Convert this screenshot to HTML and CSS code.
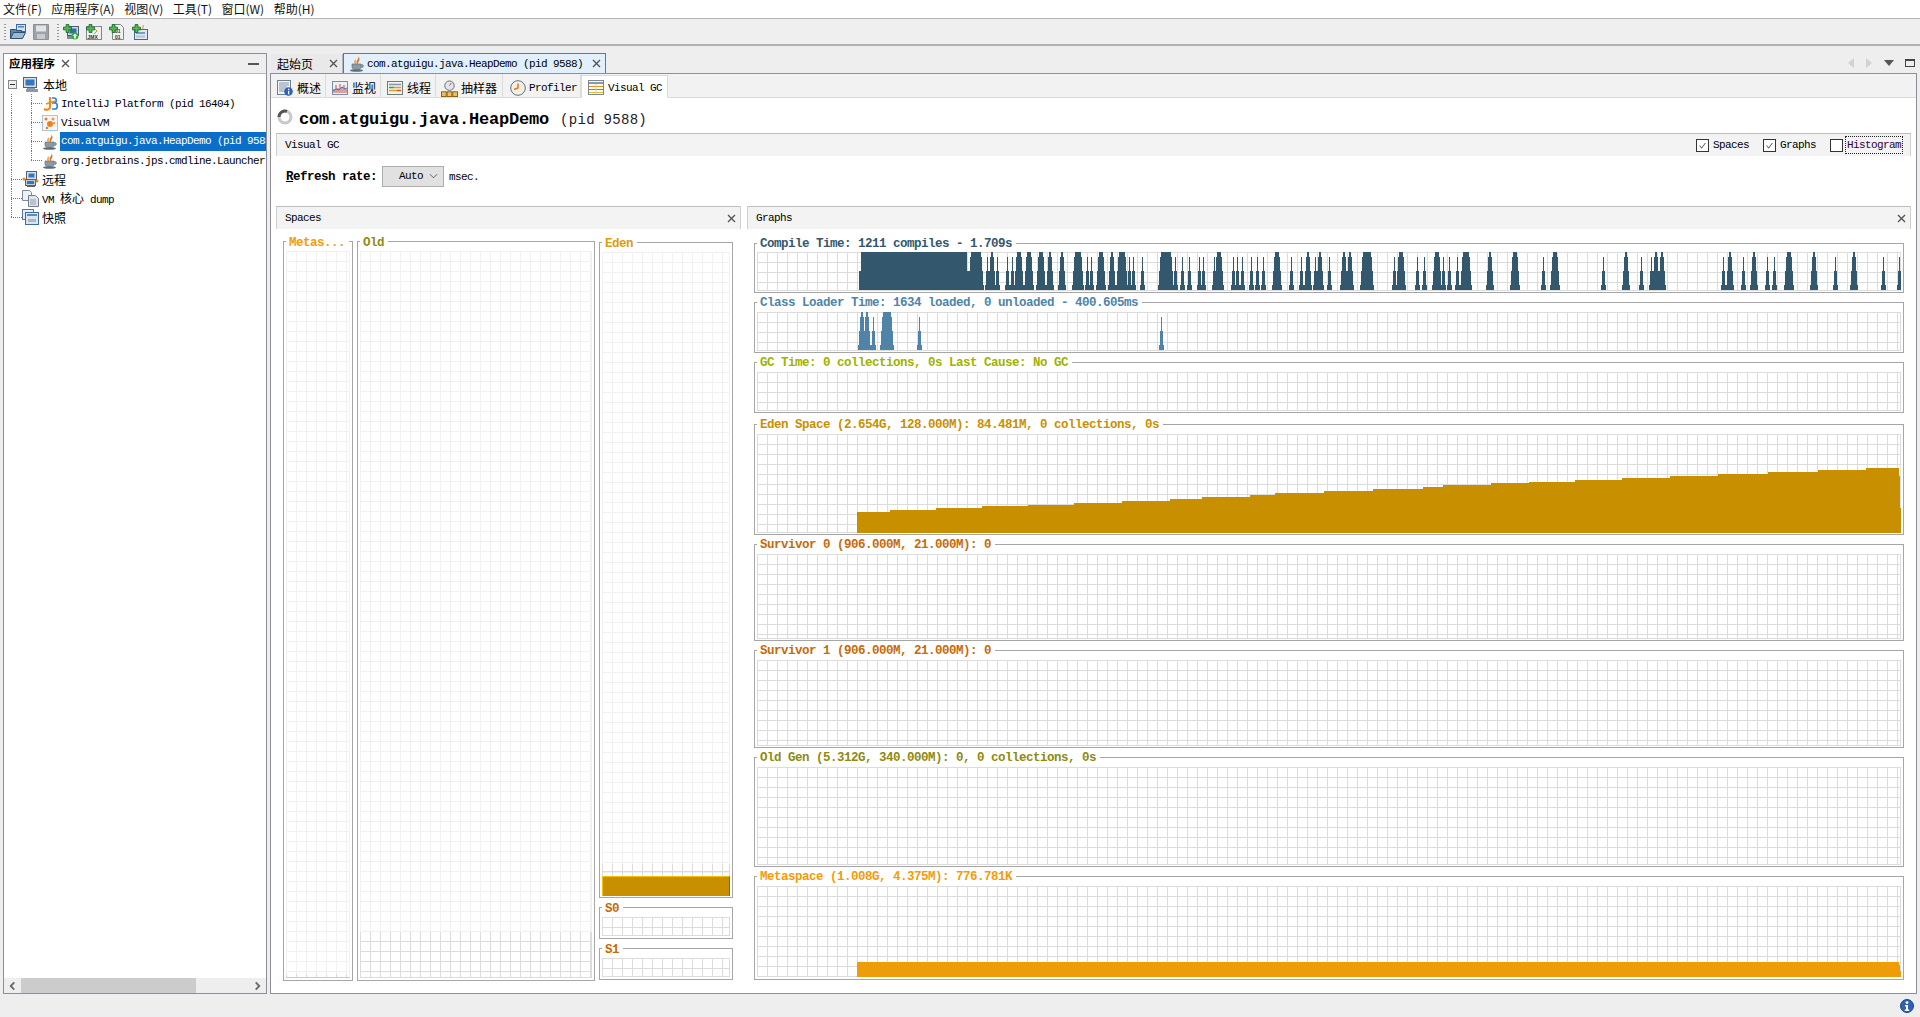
FILE: index.html
```html
<!DOCTYPE html>
<html lang="zh">
<head>
<meta charset="utf-8">
<title>VisualVM</title>
<link rel="stylesheet" href="styles.css">
</head>
<body>
<svg class="defs" aria-hidden="true">
  <defs>
    <path id="t" d="M-2 38V33H-1V19H0V5H1V19H2V33H3V38Z"/>
    <path id="f2" d="M-4 38V33H-3V19H-2V5H-1V0H1V5H2V19H3V33H4V38Z"/>
    <path id="f4" d="M-5 38V33H-4V19H-3V5H-2V0H2V5H3V19H4V33H5V38Z"/>
    <path id="f6" d="M-6 38V33H-5V19H-4V5H-3V0H3V5H4V19H5V33H6V38Z"/>
    <path id="f8" d="M-7 38V33H-6V19H-5V5H-4V0H4V5H5V19H6V33H7V38Z"/>
    <path id="f10" d="M-8 38V33H-7V19H-6V5H-5V0H5V5H6V19H7V33H8V38Z"/>
    <symbol id="plus" viewBox="0 0 10 10"><path d="M3.5.5h3v3h3v3h-3v3h-3v-3h-3v-3h3z" fill="#4dbb4d" stroke="#1d6a2a"/></symbol>
    <symbol id="i-x" viewBox="0 0 9 9"><path d="M1 1l7 7M8 1L1 8" stroke="#555" stroke-width="1.4" fill="none"/></symbol>
    <symbol id="i-computer" viewBox="0 0 17 17"><rect x=".5" y="1.5" width="13" height="10" fill="#d9e0e8" stroke="#56636f"/><rect x="2.5" y="3.5" width="9" height="6" fill="#2f78c4"/><path d="M4 12h8v1h3v3H3v-3h1z" fill="#8c98a3"/></symbol>
    <symbol id="i-java" viewBox="0 0 16 16"><path d="M9 0c2 3-3 4-1 8h1c-1-2 4-4 0-8z" fill="#e8761a"/><path d="M6 3c0 2-2 3 0 5h1C6 6 8 5 6 3z" fill="#f0a040"/><path d="M3 8h9v3c0 2-2 3-4.500 3S3 13 3 11z" fill="#8d9aa6" stroke="#5a6874" stroke-width=".6"/><path d="M12 9h2v2h-2" fill="none" stroke="#5a6874"/><ellipse cx="7.500" cy="14.500" rx="6.500" ry="1.300" fill="#5f6d79"/></symbol>
    <symbol id="i-idea" viewBox="0 0 16 16"><path d="M8 1v10c0 2.500-3 3.500-6 2" fill="none" stroke="#f08a1d" stroke-width="2.200"/><path d="M10 2h2c3 0 3 5 0 5h-2m0 0h3c3 0 3 6 0 6h-3" fill="none" stroke="#3a7fd0" stroke-width="1.600"/><path d="M4 8l9-3" stroke="#f08a1d" stroke-width="1.500"/></symbol>
    <symbol id="i-vvm" viewBox="0 0 16 16"><rect x=".5" y=".5" width="15" height="15" fill="#f6f6f6" stroke="#a9c6de"/><circle cx="8" cy="9" r="3" fill="#ef7f1a"/><circle cx="4" cy="4" r="1.500" fill="#ef7f1a"/><circle cx="11" cy="4" r="1.500" fill="#f29a50"/><circle cx="5" cy="13" r="1.200" fill="#ef7f1a"/><circle cx="12" cy="8" r="1" fill="#ef7f1a"/></symbol>
    <symbol id="i-remote" viewBox="0 0 17 17"><rect x="4.500" y=".5" width="10" height="8" fill="#d9e0e8" stroke="#56636f"/><rect x="6.500" y="2.500" width="6" height="4" fill="#2f78c4"/><rect x="3.500" y="8.500" width="10" height="6" fill="#c8ced4" stroke="#56636f"/><rect x="5" y="10" width="7" height="3" fill="#2f78c4"/><circle cx="2" cy="8" r="1.500" fill="#e08a20"/><circle cx="15" cy="10" r="1.500" fill="#e08a20"/><path d="M5 15.500h8" stroke="#56636f"/></symbol>
    <symbol id="i-dump" viewBox="0 0 17 17"><path d="M.5.5h7l2 2v8h-9z" fill="#eef1f4" stroke="#7c8a98"/><path d="M6.500 5.500h7l3 3v8h-10z" fill="#dfe5eb" stroke="#6f7e8c"/><path d="M8 10h6M8 12h6M8 14h6" stroke="#8fa0b0"/></symbol>
    <symbol id="i-snap" viewBox="0 0 17 17"><rect x=".5" y=".5" width="11" height="10" fill="#e6edf4" stroke="#4f78a8"/><rect x="3.500" y="3.500" width="13" height="12" fill="#dbe5ef" stroke="#3f6a9c"/><rect x="5" y="5" width="10" height="2" fill="#5b8cc0"/><path d="M6 10h8v3H6z" fill="#a9b8c6"/></symbol>
    <symbol id="i-info" viewBox="0 0 14 14"><circle cx="7" cy="7" r="6.500" fill="#2f62b4" stroke="#1c4488"/><circle cx="7" cy="3.600" r="1.400" fill="#fff"/><path d="M5 6h3v4.500h1.200V12H4.800v-1.500H6V7.500H5z" fill="#fff"/></symbol>
    <symbol id="t-open" viewBox="0 0 16 16"><rect x="6.500" y=".5" width="9" height="7" fill="#cfe0f0" stroke="#3f6a9c"/><rect x="8" y="2" width="6" height="1.500" fill="#4f82b8"/><path d="M.5 5.500h5l1 1h5v8h-11z" fill="#5f87ad" stroke="#2f4f70"/><path d="M.5 14.500l3-6h12l-3 6z" fill="#9ab8d4" stroke="#2f4f70"/></symbol>
    <symbol id="t-save" viewBox="0 0 16 16"><path d="M.5.500h15v15H.5z" fill="#9ca2a8" stroke="#8a9096"/><rect x="3" y="1.500" width="10" height="6" fill="#e2e4e6"/><rect x="4" y="10" width="8" height="5" fill="#c6cace"/></symbol>
    <symbol id="t-remote" viewBox="0 0 16 16"><rect x="4.500" y="2.500" width="11" height="9" fill="#cfd7df" stroke="#4f5d6a"/><rect x="6.500" y="4.500" width="7" height="5" fill="#2f6fb0"/><path d="M4 12h9v3H4z" fill="#7f8b96"/><circle cx="12" cy="12" r="3.500" fill="#3aa53a"/><path d="M12 9.500l2.500 2.500h-1.500v2.500h-2V12H9.500z" fill="#d8f4d8"/><use href="#plus" width="9" height="9"/></symbol>
    <symbol id="t-jmx" viewBox="0 0 16 16"><rect x=".5" y="2.500" width="15" height="13" fill="#eef0f2" stroke="#7a8894"/><path d="M8 4l3 3-3 3" fill="none" stroke="#e0902a"/><text x="1.500" y="14.500" class="tiny">JMX</text><use href="#plus" width="9" height="9"/></symbol>
    <symbol id="t-dump" viewBox="0 0 16 16"><path d="M3.500.5h8l3 3v12h-11z" fill="#eef0f2" stroke="#7a8894"/><text x="6" y="9" class="tiny">01</text><text x="6" y="14.500" class="tiny">01</text><use href="#plus" width="9" height="9"/></symbol>
    <symbol id="t-snap" viewBox="0 0 16 16"><rect x="2.500" y="5.500" width="13" height="10" fill="#dfe7ef" stroke="#3f6a9c"/><path d="M4 8h9v2H4z" fill="#6fa0d0"/><path d="M4 11.500h9v2H4z" fill="#b7c4d0"/><path d="M11 1c1 2-1 2 0 4" stroke="#e08a20" fill="none"/><use href="#plus" width="9" height="9"/></symbol>
    <symbol id="s-over" viewBox="0 0 16 16"><rect x=".5" y=".5" width="13" height="14" fill="#f3f5f7" stroke="#6f7e8c"/><path d="M2 3h10M2 5h10M2 7h8M2 9h6M2 11h6" stroke="#7f97ad"/><circle cx="11.500" cy="11.500" r="4.300" fill="#2f62b4"/><path d="M11 8.800h1.300v1.200H11zM11 10.800h1.300v3.400H11z" fill="#fff"/></symbol>
    <symbol id="s-mon" viewBox="0 0 16 16"><rect x=".5" y="1.500" width="15" height="13" fill="#eaf0f6" stroke="#7a8fa3"/><path d="M2 13V9M4 13V5M6 13V8M8 13V4M10 13V7M12 13V5M14 13V9" stroke="#d84a3a" stroke-width="1"/><path d="M1 11l3-2 3 1 3-3 3 2 2-1" stroke="#2f78c4" fill="none"/></symbol>
    <symbol id="s-thr" viewBox="0 0 16 16"><rect x=".5" y="1.500" width="15" height="13" fill="#f0f2ee" stroke="#6f7e70"/><path d="M2 4.500h12" stroke="#7f97ad" stroke-width="1.500"/><path d="M2 7.500h5" stroke="#3aa53a" stroke-width="1.500"/><path d="M7 7.500h7" stroke="#e0a020" stroke-width="1.500"/><path d="M2 10.500h8" stroke="#e0a020" stroke-width="1.500"/><path d="M10 10.500h4" stroke="#d84a3a" stroke-width="1.500"/></symbol>
    <symbol id="s-smp" viewBox="0 0 18 18"><circle cx="9" cy="6" r="5" fill="#dfe5eb" stroke="#5f6d79"/><path d="M9 6L11 3" stroke="#d84a3a"/><rect x=".5" y="12.500" width="5" height="5" fill="#f0c060" stroke="#8a5a10"/><rect x="6.500" y="12.500" width="5" height="5" fill="#f0c060" stroke="#8a5a10"/><rect x="12.500" y="12.500" width="5" height="5" fill="#f0c060" stroke="#8a5a10"/></symbol>
    <symbol id="s-clk" viewBox="0 0 16 16"><circle cx="8" cy="8" r="7.300" fill="#f7f0e4" stroke="#5f7084"/><path d="M8 3.500V8l-4 1.500" stroke="#e0761a" stroke-width="1.500" fill="none"/></symbol>
    <symbol id="s-gc" viewBox="0 0 16 16"><rect x=".5" y=".5" width="15" height="14" fill="#fbfbf0" stroke="#7a8894"/><path d="M1 3h14" stroke="#8a9aa8" stroke-width="2"/><path d="M1 6.500h14" stroke="#e09020"/><path d="M1 9.500h14" stroke="#4aa84a"/><path d="M1 12.500h14" stroke="#e0c020"/><path d="M8 4v10" stroke="#c8ccd0"/></symbol>
  </defs>
</svg>

<header class="menubar">
  <span>文件(F)</span><span>应用程序(A)</span><span>视图(V)</span><span>工具(T)</span><span>窗口(W)</span><span>帮助(H)</span>
</header>

<div class="toolbar">
  <i class="grip"></i>
  <svg class="tool"><use href="#t-open"/></svg>
  <svg class="tool"><use href="#t-save"/></svg>
  <i class="grip grip-mid"></i>
  <svg class="tool"><use href="#t-remote"/></svg>
  <svg class="tool"><use href="#t-jmx"/></svg>
  <svg class="tool"><use href="#t-dump"/></svg>
  <svg class="tool"><use href="#t-snap"/></svg>
</div>

<main class="workspace">
  <section class="nav">
    <div class="nav-head">
      <div class="nav-tab"><b class="cjk">应用程序</b><svg class="x"><use href="#i-x"/></svg></div>
      <i class="minimize"></i>
    </div>
    <div class="tree">
      <div class="row"><i class="expander"></i><svg class="ico-top"><use href="#i-computer"/></svg><span class="cjk label">本地</span></div>
      <div class="row"><i class="guide"></i><i class="elbow"></i><svg class="ico"><use href="#i-idea"/></svg><span class="mono label">IntelliJ Platform (pid 16404)</span></div>
      <div class="row"><i class="guide"></i><i class="elbow"></i><svg class="ico"><use href="#i-vvm"/></svg><span class="mono label">VisualVM</span></div>
      <div class="row"><i class="guide"></i><i class="elbow"></i><svg class="ico"><use href="#i-java"/></svg><span class="mono label selected">com.atguigu.java.HeapDemo (pid 9588)</span></div>
      <div class="row"><i class="guide"></i><i class="elbow end"></i><svg class="ico"><use href="#i-java"/></svg><span class="mono label sel-pad">org.jetbrains.jps.cmdline.Launcher</span></div>
      <div class="row"><i class="elbow root"></i><svg class="ico-top"><use href="#i-remote"/></svg><span class="cjk label">远程</span></div>
      <div class="row"><i class="elbow root"></i><svg class="ico-top"><use href="#i-dump"/></svg><span class="mono label">VM <span class="cjk">核心</span> dump</span></div>
      <div class="row"><i class="elbow root end"></i><svg class="ico-top"><use href="#i-snap"/></svg><span class="cjk label">快照</span></div>
    </div>
    <div class="hscroll">
      <svg class="arrow" viewBox="0 0 10 10"><path d="M7 1L3 5l4 4" fill="none" stroke="#666" stroke-width="2"/></svg>
      <i class="thumb"></i>
      <svg class="arrow arrow-end" viewBox="0 0 10 10"><path d="M3 1l4 4-4 4" fill="none" stroke="#666" stroke-width="2"/></svg>
    </div>
  </section>

  <section class="editor">
    <div class="doc-tabs">
      <div class="doc-tab"><span class="cjk">起始页</span><svg class="x"><use href="#i-x"/></svg></div>
      <div class="doc-tab active"><svg class="ico"><use href="#i-java"/></svg><span class="mono">com.atguigu.java.HeapDemo (pid 9588)</span><svg class="x"><use href="#i-x"/></svg></div>
      <div class="win-ctl">
        <i class="tri-l"></i><i class="tri-r"></i><i class="tri-d"></i><i class="maxbox"></i>
      </div>
    </div>
    <div class="doc-body">
      <nav class="sub-tabs">
        <div class="sub-tab"><svg class="ico"><use href="#s-over"/></svg><span class="cjk">概述</span></div>
        <div class="sub-tab"><svg class="ico"><use href="#s-mon"/></svg><span class="cjk">监视</span></div>
        <div class="sub-tab"><svg class="ico"><use href="#s-thr"/></svg><span class="cjk">线程</span></div>
        <div class="sub-tab"><svg class="ico-top"><use href="#s-smp"/></svg><span class="cjk">抽样器</span></div>
        <div class="sub-tab"><svg class="ico"><use href="#s-clk"/></svg><span class="mono">Profiler</span></div>
        <div class="sub-tab active"><svg class="ico"><use href="#s-gc"/></svg><span class="mono">Visual GC</span></div>
      </nav>
      <div class="content">
        <h1 class="title">
          <svg class="spinner" viewBox="0 0 16 16"><circle cx="8" cy="8" r="6" fill="none" stroke="#c8c8c8" stroke-width="3"/><path d="M2 8a6 6 0 0 1 8-5.600" fill="none" stroke="#555" stroke-width="3"/></svg>
          <b>com.atguigu.java.HeapDemo</b><span>(pid 9588)</span>
        </h1>
        <div class="section-bar">
          <span class="mono">Visual GC</span>
          <div class="checks">
            <svg class="check" viewBox="0 0 13 13"><path d="M3 6.500l2.500 3L10 3.500"/></svg><span class="mono">Spaces</span>
            <svg class="check" viewBox="0 0 13 13"><path d="M3 6.500l2.500 3L10 3.500"/></svg><span class="mono">Graphs</span>
            <svg class="check" viewBox="0 0 13 13"></svg><span class="mono focus">Histogram</span>
          </div>
        </div>
        <div class="refresh">
          <label class="refresh-label"><u>R</u>efresh rate:</label>
          <div class="combo"><span class="mono">Auto</span><svg class="chev" viewBox="0 0 10 6"><path d="M1 1l4 4 4-4" fill="none" stroke="#555"/></svg></div>
          <span class="mono msec">msec.</span>
        </div>
        <div class="columns">
          <section class="col-spaces">
            <div class="section-bar short"><span class="mono">Spaces</span><svg class="x-bold"><use href="#i-x"/></svg></div>
            <div class="spaces-body">
              <fieldset class="box sp meta"><legend class="c-meta">Metas...</legend>
                <div class="plot light h-tall"><div class="cap cap-meta"><div class="meta-fill"></div></div></div>
              </fieldset>
              <fieldset class="box sp old"><legend class="c-old">Old</legend>
                <div class="plot light h-tall"><div class="cap cap-old"></div></div>
              </fieldset>
              <div class="young">
                <fieldset class="box sp eden"><legend class="c-eden">Eden</legend>
                  <div class="plot light h-eden"><div class="cap cap-eden"><div class="eden-fill"></div></div></div>
                </fieldset>
                <fieldset class="box sp surv"><legend class="c-surv">S0</legend><div class="plot h-surv"></div></fieldset>
                <fieldset class="box sp surv"><legend class="c-surv">S1</legend><div class="plot h-surv"></div></fieldset>
              </div>
            </div>
          </section>
          <section class="col-graphs">
            <div class="section-bar short"><span class="mono">Graphs</span><svg class="x-bold"><use href="#i-x"/></svg></div>
            <div class="graphs-body">
              <fieldset class="box g-compile"><legend class="c-compile">Compile Time: 1211 compiles - 1.709s</legend>
                <div class="plot h-39"><svg class="chart fill-compile">
                  <path d="M102 38V19H104V0H210V19H212V38Z"/>
                  <use href="#f10" x="219"/><use href="#t" x="230"/><use href="#f2" x="235"/><use href="#t" x="240"/><use href="#t" x="250"/><use href="#t" x="255"/><use href="#f4" x="262"/><use href="#f4" x="272"/><use href="#f4" x="284"/><use href="#f2" x="293"/><use href="#f2" x="305"/><use href="#f6" x="321"/><use href="#t" x="330"/><use href="#t" x="334"/><use href="#f4" x="344"/><use href="#f2" x="355"/><use href="#f6" x="365"/><use href="#t" x="372"/><use href="#t" x="376"/><use href="#t" x="385"/><use href="#f10" x="409"/><use href="#t" x="418"/><use href="#t" x="425"/><use href="#t" x="432"/><use href="#t" x="442"/><use href="#t" x="446"/><use href="#t" x="457"/><use href="#f4" x="462"/><use href="#t" x="476"/><use href="#t" x="480"/><use href="#t" x="485"/><use href="#t" x="494"/><use href="#t" x="500"/><use href="#t" x="506"/><use href="#f4" x="520"/><use href="#t" x="534"/><use href="#t" x="544"/><use href="#f2" x="551"/><use href="#t" x="558"/><use href="#f2" x="563"/><use href="#t" x="572"/><use href="#f2" x="587"/><use href="#f2" x="593"/><use href="#f8" x="610"/><use href="#t" x="637"/><use href="#f4" x="644"/><use href="#t" x="660"/><use href="#t" x="667"/><use href="#f4" x="680"/><use href="#t" x="686"/><use href="#t" x="692"/><use href="#t" x="700"/><use href="#f6" x="709"/><use href="#f2" x="733"/><use href="#f4" x="758"/><use href="#t" x="786"/><use href="#f4" x="798"/><use href="#t" x="846"/><use href="#f2" x="869"/><use href="#t" x="884"/><use href="#t" x="894"/><use href="#f2" x="899"/><use href="#f2" x="905"/><use href="#t" x="966"/><use href="#f2" x="973"/><use href="#t" x="986"/><use href="#f2" x="997"/><use href="#t" x="1010"/><use href="#t" x="1017"/><use href="#f4" x="1032"/><use href="#f2" x="1057"/><use href="#t" x="1078"/><use href="#f2" x="1097"/><use href="#t" x="1126"/><use href="#t" x="1142"/>
                </svg></div>
              </fieldset>
              <fieldset class="box g-class"><legend class="c-class">Class Loader Time: 1634 loaded, 0 unloaded - 400.605ms</legend>
                <div class="plot h-39"><svg class="chart fill-class">
                  <use href="#f2" x="105"/><use href="#f2" x="110"/><use href="#t" x="116"/><use href="#f8" x="130"/><use href="#t" x="162"/><use href="#t" x="404"/>
                </svg></div>
              </fieldset>
              <fieldset class="box g-gc"><legend class="c-gc">GC Time: 0 collections, 0s Last Cause: No GC</legend><div class="plot h-39"></div></fieldset>
              <fieldset class="box g-eden"><legend class="c-edensp">Eden Space (2.654G, 128.000M): 84.481M, 0 collections, 0s</legend>
                <div class="plot h-99"><svg class="chart fill-eden"><path d="M100 99V78H133V76H179V74H225V72H271V71H317V69H365V67H413V65H445V63H493V61H518V59H567V57H616V55H666V53H686V51H734V49H772V48H818V46H865V44H913V42H961V40H1011V38H1061V36H1109V34H1142V42H1143V74H1144V99Z"/></svg></div>
              </fieldset>
              <fieldset class="box g-s0"><legend class="c-surv">Survivor 0 (906.000M, 21.000M): 0</legend><div class="plot h-85"></div></fieldset>
              <fieldset class="box g-s1"><legend class="c-surv">Survivor 1 (906.000M, 21.000M): 0</legend><div class="plot h-86"></div></fieldset>
              <fieldset class="box g-old"><legend class="c-old">Old Gen (5.312G, 340.000M): 0, 0 collections, 0s</legend><div class="plot h-98"></div></fieldset>
              <fieldset class="box g-meta"><legend class="c-meta">Metaspace (1.008G, 4.375M): 776.781K</legend>
                <div class="plot h-91"><svg class="chart fill-meta"><path d="M100 91V76H1142V79H1143V85H1144V91Z"/></svg></div>
              </fieldset>
            </div>
          </section>
        </div>
      </div>
    </div>
  </section>
</main>

<footer class="status"><svg class="status-info"><use href="#i-info"/></svg></footer>
</body>
</html>
```

FILE: styles.css
```css
* { box-sizing: border-box; }
html, body { margin: 0; padding: 0; }
body {
  width: 1920px;
  height: 1017px;
  overflow: hidden;
  background: #eeeeee;
  display: flex;
  flex-direction: column;
  color: #000;
  font: 12px "Noto Sans CJK SC", "Liberation Sans", sans-serif;
}
i { display: block; font-style: normal; }
.defs { display: none; }
.tiny { font: bold 5px "Liberation Sans", sans-serif; fill: #333; }
.cjk { font: 12px/14px "Noto Sans CJK SC", sans-serif; }
.mono { font: 11px/14px "Liberation Mono", "Noto Sans CJK SC", monospace; letter-spacing: -0.6px; white-space: nowrap; }
.mono .cjk { letter-spacing: 0; }

/* menu and toolbar */
.menubar {
  height: 19px;
  flex: none;
  background: #fff;
  border-bottom: 1px solid #b5b5b5;
  display: flex;
  gap: 9.500px;
  padding-left: 3px;
  line-height: 17px;
  color: #111;
}
.toolbar {
  height: 27px;
  flex: none;
  display: flex;
  align-items: center;
  padding-left: 4px;
  background: #efefef;
  border-bottom: 2px solid #b0b0b0;
}
.grip {
  width: 2px;
  height: 16px;
  margin-right: 4px;
  background: repeating-linear-gradient(#999 0 1px, transparent 1px 3px);
}
.grip-mid { margin-left: 1px; }
.tool { width: 16px; height: 16px; margin-right: 7px; }

/* workspace */
.workspace {
  flex: none;
  height: 948px;
  padding: 7px 3px 0;
  display: flex;
  gap: 3px;
}
.nav {
  width: 264px;
  flex: none;
  background: #fff;
  border: 1px solid #8e8e94;
  display: flex;
  flex-direction: column;
}
.nav-head {
  height: 20px;
  flex: none;
  background: #eeeeee;
  border-bottom: 1px solid #b9b9b9;
  display: flex;
  align-items: center;
  justify-content: space-between;
  padding-right: 7px;
}
.nav-tab {
  width: 73px;
  height: 20px;
  background: #fff;
  border-right: 1px solid #a8a8a8;
  border-bottom: 1px solid #fff;
  display: flex;
  align-items: center;
  justify-content: space-between;
  padding: 0 6px 0 5px;
}
.nav-tab b { font-weight: 700; font-size: 11.500px; }
.x { width: 9px; height: 9px; flex: none; }
.minimize { width: 11px; height: 2px; background: #555; }

/* tree */
.tree { flex: 1; min-height: 0; overflow: hidden; padding-top: 1px; }
.row { height: 19px; display: flex; align-items: center; white-space: nowrap; }
.expander {
  width: 9px;
  height: 9px;
  margin: 0 6px 0 4px;
  border: 1px solid #888;
  background: linear-gradient(#333, #333) center / 5px 1px no-repeat, #eee;
  flex: none;
}
.guide {
  width: 20px;
  height: 19px;
  margin-left: 7px;
  flex: none;
  background: repeating-linear-gradient(#777 0 1px, transparent 1px 2px) 0 0 / 1px 100% no-repeat;
}
.elbow {
  width: 11px;
  height: 19px;
  flex: none;
  background:
    repeating-linear-gradient(90deg, #777 0 1px, transparent 1px 2px) 0 50% / 100% 1px no-repeat,
    repeating-linear-gradient(#777 0 1px, transparent 1px 2px) 0 0 / 1px 100% no-repeat;
}
.elbow.end {
  background:
    repeating-linear-gradient(90deg, #777 0 1px, transparent 1px 2px) 0 50% / 100% 1px no-repeat,
    repeating-linear-gradient(#777 0 1px, transparent 1px 2px) 0 0 / 1px 50% no-repeat;
}
.elbow.root { margin-left: 7px; margin-right: 0; }
.ico { width: 16px; height: 16px; flex: none; }
.ico-top { width: 17px; height: 17px; flex: none; }
.label { margin-left: 3px; }
.selected {
  flex: 1;
  min-width: 0;
  overflow: hidden;
  margin-left: 2px;
  padding-left: 1px;
  height: 19px;
  line-height: 19px;
  background: #0b6fc9;
  color: #fff;
}
.sel-pad { margin-left: 3px; }
.hscroll {
  height: 15px;
  flex: none;
  background: #eeeeee;
  display: flex;
  align-items: center;
  padding: 0 4px;
}
.arrow { width: 9px; height: 10px; flex: none; }
.thumb { width: 175px; height: 15px; margin-left: 4px; background: #cccccc; }
.arrow-end { margin-left: auto; }

/* editor */
.editor { flex: 1; min-width: 0; display: flex; flex-direction: column; height: 941px; }
.doc-tabs { height: 20px; flex: none; display: flex; align-items: flex-end; }
.doc-tab {
  height: 19px;
  width: 72px;
  margin-left: 1px;
  background: #e9e9e9;
  border-right: 1px solid #b5b5b5;
  display: flex;
  align-items: center;
  justify-content: space-between;
  padding: 0 4px 0 6px;
}
.doc-tab.active {
  width: 263px;
  height: 20px;
  margin-left: 0;
  background: #e2effc;
  border: 1px solid #3f82b8;
  border-bottom: 0;
  padding: 0 4px 0 5px;
}
.doc-tab.active .mono { margin-left: 2px; margin-right: auto; }
.win-ctl { margin-left: auto; display: flex; align-items: center; height: 20px; padding-right: 2px; gap: 10px; }
.tri-l { width: 0; height: 0; border: 5px solid transparent; border-left: 0; border-right: 6px solid #d2d2d2; margin-right: 2px; }
.tri-r { width: 0; height: 0; border: 5px solid transparent; border-right: 0; border-left: 6px solid #d2d2d2; }
.tri-d { width: 0; height: 0; margin-left: 2px; border: 5px solid transparent; border-bottom: 0; border-top: 6px solid #555; }
.maxbox { width: 10px; height: 8px; border: 1px solid #444; border-top-width: 2px; margin-left: 1px; }
.doc-body {
  flex: 1;
  min-height: 0;
  background: #fff;
  border: 1px solid #8e8e94;
  display: flex;
  flex-direction: column;
}
.sub-tabs {
  height: 24px;
  flex: none;
  background: #f2f2f2;
  border-bottom: 1px solid #dcdcdc;
  display: flex;
  align-items: flex-end;
}
.sub-tab {
  height: 23px;
  display: flex;
  align-items: center;
  gap: 4px;
  padding: 5px 4px 0 6px;
  border-right: 1px solid #dcdcdc;
  white-space: nowrap;
}
.sub-tab:nth-child(4) { gap: 3px; padding-right: 5px; padding-left: 5px; }
.sub-tab:nth-child(5) { gap: 3px; padding-left: 7px; padding-right: 3px; }
.sub-tab.active {
  height: 23px;
  margin-bottom: -1px;
  background: #fff;
  border: 1px solid #dcdcdc;
  border-bottom: 0;
  padding-right: 5px;
  padding-top: 1px;
}
.content { flex: 1; min-height: 0; padding: 0 5px; display: flex; flex-direction: column; }
.title {
  height: 35px;
  flex: none;
  margin: 0;
  padding: 8px 0 0 1px;
  display: flex;
  align-items: center;
  font-weight: normal;
}
.spinner { width: 16px; height: 16px; margin-top: -5px; }
.title b { margin-left: 6px; font: bold 17px/20px "Liberation Mono", monospace; letter-spacing: -0.2px; }
.title span { margin-left: 11px; font: 14px/20px "Liberation Mono", monospace; letter-spacing: 0.3px; color: #222; }
.section-bar {
  height: 23px;
  flex: none;
  background: #f3f3f3;
  border-top: 1px solid #bdbdbd;
  border-left: 1px solid #cfcfcf;
  border-right: 1px solid #cfcfcf;
  display: flex;
  align-items: center;
  justify-content: space-between;
  padding: 0 9px 0 8px;
}
.section-bar.short { padding-right: 4px; }
.checks { display: flex; align-items: center; }
.check {
  width: 13px;
  height: 13px;
  margin-right: 4px;
  background: #fff;
  border: 1px solid #333;
  fill: none;
  stroke: #666;
  stroke-width: 1.2;
}
.checks .mono + .check { margin-left: 14px; }
.focus { outline: 1px dotted #222; outline-offset: 1px; color: #300040; }
.refresh {
  height: 50px;
  flex: none;
  padding: 0 0 10px 10px;
  display: flex;
  align-items: center;
}
.refresh-label { font: bold 12.500px/14px "Liberation Mono", monospace; letter-spacing: -0.5px; margin-right: 5px; padding-top: 2px; height: 16px; }
.msec { padding-top: 1px; }
.combo {
  width: 62px;
  height: 21px;
  background: #e1e1e1;
  border: 1px solid #adadad;
  margin-right: 5px;
  display: flex;
  align-items: center;
  padding: 0 5px 0 16px;
  justify-content: space-between;
}
.chev { width: 9px; height: 6px; }
.columns { flex: 1; min-height: 0; display: flex; gap: 6px; }
.col-spaces { width: 465px; flex: none; }
.col-graphs { flex: 1; min-width: 0; }
.x-bold { width: 9px; height: 9px; }

/* titled boxes */
.box {
  display: block;
  margin: 0;
  min-width: 0;
  border: 1px solid #a6a6a6;
  padding: 2px 2px 1px;
}
.box legend {
  padding: 0 4px 0 3px;
  margin: 0;
  font: bold 12.500px/14px "Liberation Mono", monospace;
  letter-spacing: -0.5px;
  white-space: nowrap;
  transform: translateY(1px);
}
.sp legend { transform: translateY(2px); }
.c-compile { color: #33586e; }
.c-class { color: #4f84a8; }
.c-gc { color: #9fb200; }
.c-edensp { color: #c89000; }
.c-eden { color: #dd9c10; }
.c-surv { color: #c76a08; }
.c-old { color: #8f8a10; }
.c-meta { color: #f29c08; }

.plot {
  display: flex;
  flex-direction: column;
  justify-content: flex-end;
  background-image: linear-gradient(90deg, #dcdcdc 1px, transparent 1px), linear-gradient(#dcdcdc 1px, transparent 1px);
  background-size: 10px 10px;
  box-shadow: inset 0 0 0 1px #dcdcdc;
}
.h-39 { height: 39px; }
.h-85 { height: 85px; }
.h-86 { height: 86px; }
.h-91 { height: 91px; }
.h-98 { height: 98px; }
.h-99 { height: 99px; }
.h-tall { height: 727px; }
.h-eden { height: 644px; }
.h-surv { height: 19px; }
.plot.light {
  background-image: linear-gradient(90deg, #f1f1f1 1px, transparent 1px), linear-gradient(#f1f1f1 1px, transparent 1px);
  box-shadow: inset 0 0 0 1px #f1f1f1;
}
.cap {
  flex: none;
  display: flex;
  flex-direction: column;
  justify-content: flex-end;
  background-image: linear-gradient(90deg, #dcdcdc 1px, transparent 1px), linear-gradient(#dcdcdc 1px, transparent 1px);
  background-size: 10px 10px;
  box-shadow: inset -2px -1px 0 #dcdcdc;
}
.cap-old { height: 46px; background-position: 0 -1px; box-shadow: inset -2px -1px 0 #dcdcdc; }
.cap-eden { height: 32px; background-position: 0 7px; box-shadow: inset -1px 0 0 #dcdcdc; }
.cap-meta { height: 4px; background-position: 0 8px; box-shadow: none; }
.meta-fill { height: 1px; background: #ffd020; }
.eden-fill {
  height: 20px;
  background: #c89000;
  border-top: 1px solid #f5c000;
  border-left: 1px solid #f5c000;
  border-right: 1px solid #8f6c00;
}
.chart { display: block; width: 100%; height: 100%; }
.fill-compile { fill: #33586e; }
.fill-class { fill: #4f84a8; }
.fill-eden { fill: #c89000; }
.fill-meta { fill: #ee9c08; }

/* spaces column */
.spaces-body { display: flex; gap: 4px; padding: 5px 0 0 7px; }
.sp { padding: 3px 2px 2px; }
.meta { width: 70px; height: 747px; }
.old { width: 238px; height: 747px; }
.young { width: 134px; padding-top: 1px; display: flex; flex-direction: column; gap: 2px; }
.eden { height: 663px; padding-bottom: 1px; }
.surv { height: 39px; padding-bottom: 2px; }

/* graphs column */
.graphs-body { display: flex; flex-direction: column; gap: 2px; padding: 7px 7px 0 7px; }
.g-compile { height: 57px; }
.g-class { height: 58px; padding-top: 3px; }
.g-gc { height: 58px; padding-top: 3px; margin-bottom: 2px; }
.g-eden { height: 118px; padding-top: 3px; }
.g-s0 { height: 104px; padding-top: 3px; }
.g-s1 { height: 105px; padding-top: 3px; }
.g-old { height: 117px; padding-top: 3px; }
.g-meta { height: 111px; padding-top: 3px; }

.status { flex: 1; display: flex; justify-content: flex-end; align-items: flex-start; padding: 5px 6px 0 0; }
.status-info { width: 14px; height: 14px; }
```
